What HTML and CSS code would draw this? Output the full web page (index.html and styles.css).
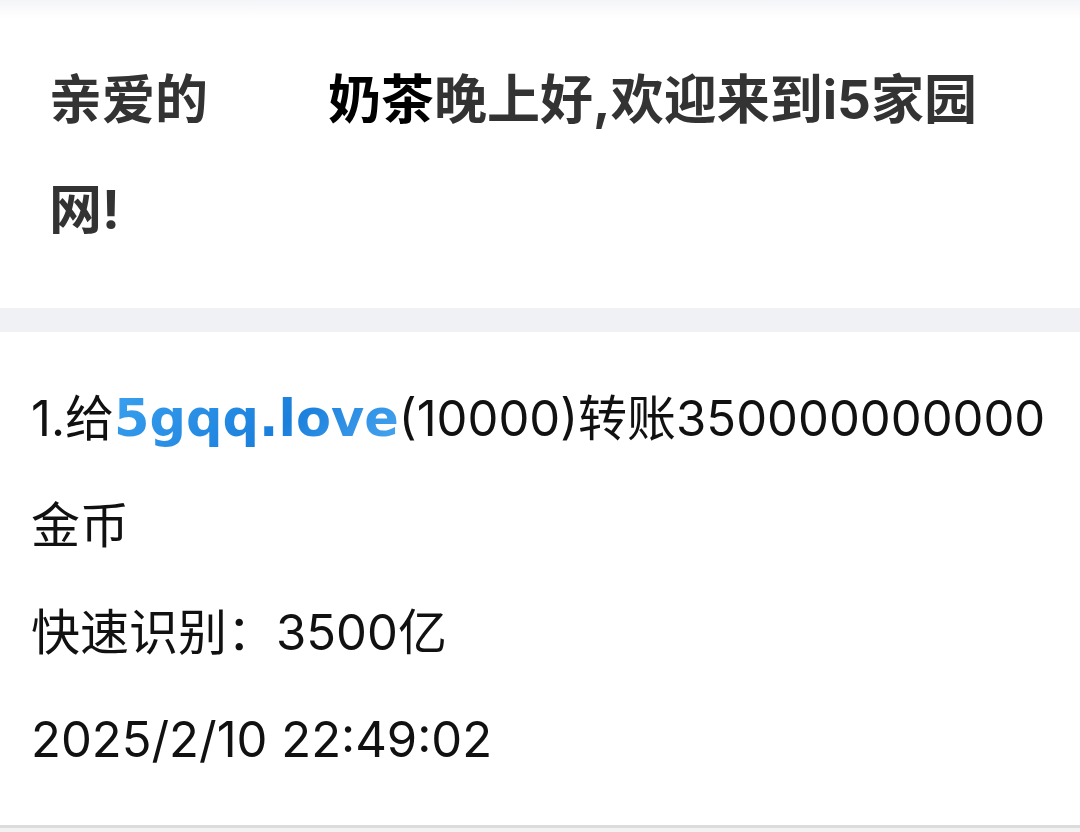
FILE: index.html
```html
<!DOCTYPE html>
<html lang="zh-CN">

<head>
    <meta charset="UTF-8">
    <meta name="viewport" content="width=device-width, initial-scale=1.0">
    <title>i5家园网</title>
    <link rel="stylesheet" href="styles.css">
</head>

<body>
    <div class="shade"></div>
    <div id="welcome">
        <h2 class="greet">亲爱的<span class="nick">奶茶</span>晚上好,欢迎来到i5家园网!</h2>
    </div>
    <div class="gap"></div>
    <div id="record">
        <p class="line">1.给<span class="site">5gqq.love</span>(10000)转账350000000000金币</p>
        <p class="line">快速识别：3500亿</p>
        <p class="line">2025/2/10 22:49:02</p>
    </div>
    <div class="foot"></div>
</body>

</html>
```

FILE: styles.css
```css
body {
    margin: 0;
    background-color: #fff;
    font-family: "Inter", "Noto Sans CJK SC", sans-serif;
    color: #111;
}

.shade {
    height: 18px;
    margin-bottom: -18px;
    background: linear-gradient(#f4f5f8, rgba(255, 255, 255, 0));
    position: relative;
}

#welcome {
    padding: 45px 40px 43px 49px;
}

.greet {
    margin: 0;
    font-size: 53px;
    line-height: 110px;
    font-weight: bold;
    color: #333;
}

.nick {
    color: #000;
    padding-left: 120px;
}

.gap {
    height: 24px;
    background-color: #f0f1f5;
}

#record {
    padding: 33px 20px 32px 31px;
}

.line {
    margin: 0;
    font-size: 49px;
    line-height: 107px;
    color: #111;
    word-break: break-all;
}

.site {
    font-family: "DejaVu Sans", sans-serif;
    font-weight: bold;
    font-size: 51px;
    line-height: 1;
    background: linear-gradient(135deg, #3aa0ee, #1a7fdc 60%, #4aa6ef);
    -webkit-background-clip: text;
    background-clip: text;
    color: transparent;
}

.foot {
    border-top: 3px solid #dcdcdc;
    height: 10px;
    background-color: #f2f2f2;
}
```
